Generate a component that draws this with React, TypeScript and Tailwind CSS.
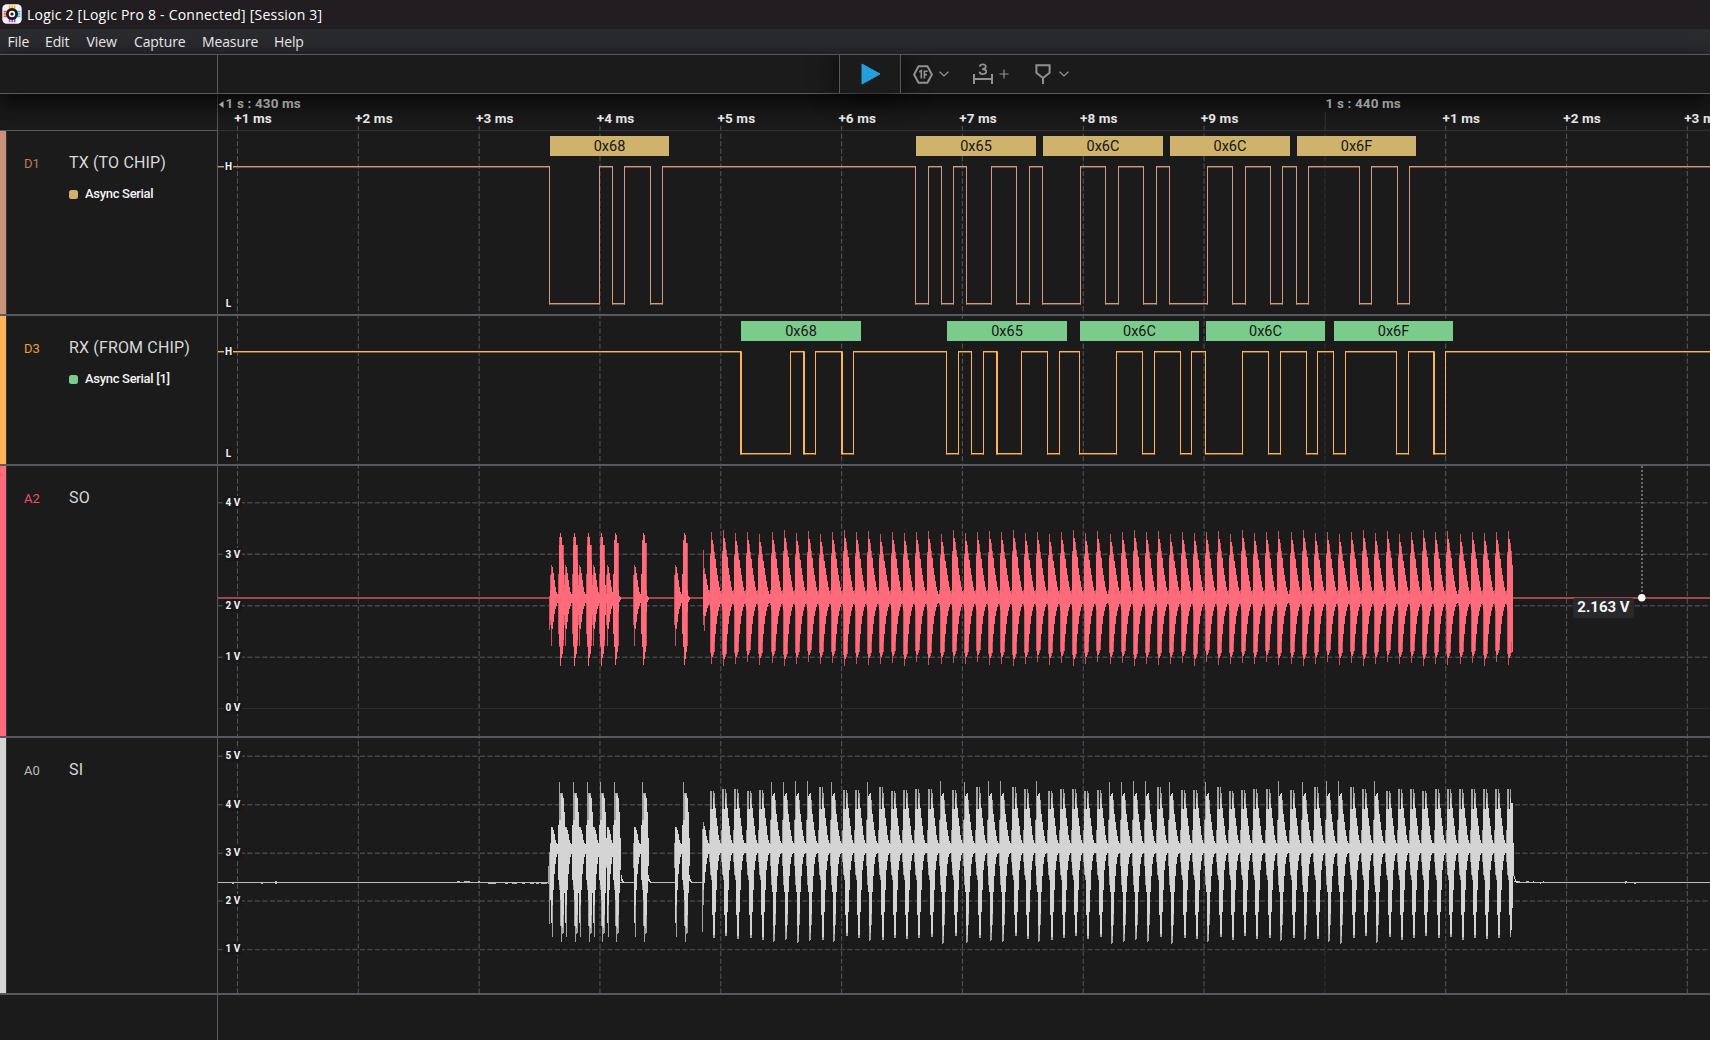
import React from "react";

const LEFT = 218;
const RIGHT = 1710;
const DIVISION = 120.82;
const FIRST_LINE = 237.5;
const GRID_LINES = Array.from({ length: 13 }, (_, i) => FIRST_LINE + i * DIVISION);

/* ---------- icons ---------- */

function AppLogo() {
  return (
    <svg width="20" height="20" viewBox="0 0 20 20" className="block">
      <rect x="0.3" y="0.3" width="19.4" height="19.4" rx="4.5" fill="#f6f3f8" />
      <g strokeWidth="1.7">
        <path d="M7.6 1.6V5M10.2 1.6V5M12.6 1.6V5" stroke="#f2b31e" />
        <path d="M7.6 15V18.2M10.2 15V18.2M12.6 15V18.2" stroke="#a050e0" />
        <path d="M1.6 7.6H5M1.6 10H5M1.6 12.4H5" stroke="#ee5a4a" />
        <path d="M15 7.6H18.4M15 10H18.4M15 12.4H18.4" stroke="#35b6ea" />
      </g>
      <circle cx="10" cy="10" r="6" fill="#1d1b20" />
      <circle cx="10" cy="10" r="2.4" fill="none" stroke="#f6f3f8" strokeWidth="1.6" />
    </svg>
  );
}

function Chevron() {
  return (
    <svg width="10" height="6" viewBox="0 0 10 6" className="block">
      <path d="M0.6 0.7L5 4.9L9.4 0.7" fill="none" stroke="#919191" strokeWidth="1.3" />
    </svg>
  );
}

function TriggerIcon() {
  return (
    <svg width="20" height="19" viewBox="0 0 20 19" className="block">
      <path
        d="M5.6 1.2H14.4L18.9 9.5L14.4 17.8H5.6L1.1 9.5Z"
        fill="none"
        stroke="#919191"
        strokeWidth="2"
        strokeLinejoin="round"
      />
      <path d="M6.2 7L8.3 5.7V13.4M11.4 13.4V6.2H14.6M11.4 9.6H14" fill="none" stroke="#919191" strokeWidth="1.6" />
    </svg>
  );
}

function MeasureIcon() {
  return (
    <svg width="20" height="22" viewBox="0 0 20 22" className="block">
      <path
        d="M6.8 3.6C7 0.6 12.8 0.5 12.8 3.6C12.8 5.3 11.3 6 9.2 6C11.6 6 13.2 6.8 13.2 8.6C13.2 11.8 6.7 11.9 6.6 8.7"
        fill="none"
        stroke="#919191"
        strokeWidth="1.8"
      />
      <path d="M1 11V21M19 11V21M1 16H19" fill="none" stroke="#919191" strokeWidth="2" />
    </svg>
  );
}

function MarkerIcon() {
  return (
    <svg width="16" height="20" viewBox="0 0 16 20" className="block">
      <path d="M1.4 1.2H14.6V8.8L8 14L1.4 8.8Z" fill="none" stroke="#919191" strokeWidth="2" />
      <path d="M8 13.5V20" stroke="#919191" strokeWidth="2" />
    </svg>
  );
}

/* ---------- grid ---------- */

function Grid({ levels = [], zero }: { levels?: number[]; zero?: number }) {
  return (
    <g>
      {GRID_LINES.map((x, i) => (
        <line key={x} x1={x} x2={x} y1={126} y2={993} stroke={i === 9 ? "#303033" : "#515157"} strokeWidth="1.1" strokeDasharray="5.2 2.3" />
      ))}
      {levels.map((y) => (
        <line key={y} x1={217.3} x2={RIGHT} y1={y} y2={y} stroke="#45454a" strokeWidth="1.4" strokeDasharray="5.2 2.3" />
      ))}
      {zero !== undefined && <line x1={LEFT} x2={RIGHT} y1={zero} y2={zero} stroke="#2b2b31" />}
    </g>
  );
}

function Plot({ top, height, children }: { top: number; height: number; children: React.ReactNode }) {
  return (
    <svg width={1492} height={height} viewBox={`${LEFT} ${top} 1492 ${height}`} className="block overflow-hidden">
      {children}
    </svg>
  );
}

function AxisLabel({ y, children }: { y: number; children: string }) {
  const wide = children.length > 1;
  return (
    <span
      className={`absolute left-[6px] flex h-[13px] items-center justify-center rounded-[2px] bg-[#18181a] text-[10px] font-bold text-[#f2f2f2] ${
        wide ? "w-[18px]" : "w-[9px]"
      }`}
      style={{ top: y - 7 }}
    >
      {children}
    </span>
  );
}

/* ---------- digital signals ---------- */

const TX_EDGES = [
  549.5, 599.5, 612.5, 624.5, 650.5, 662.5, 915.5, 928.5, 941.5, 953.5, 966.5, 991.5, 1016.5, 1029.5, 1042.5, 1080.5,
  1105.5, 1118.5, 1143.5, 1156.5, 1169.5, 1207.5, 1232.5, 1245.5, 1270.5, 1282.5, 1296.5, 1308.5, 1359.5, 1371.5,
  1397.5, 1409.5,
];
const RX_EDGES = [
  741, 790.5, 804, 815.5, 842, 853.5, 946.5, 958.5, 971.5, 983.5, 997, 1021.5, 1047.5, 1059.5, 1079.5, 1116.5, 1142.5,
  1154.5, 1180.5, 1191.5, 1205.5, 1242.5, 1268.5, 1280.5, 1306.5, 1317.5, 1333.5, 1345.5, 1396.5, 1408.5, 1434, 1445.5,
];

function Digital({ edges, high, low, color, dim }: { edges: number[]; high: number; low: number; color: string; dim: string }) {
  const xs = [LEFT, ...edges, RIGHT];
  return (
    <g>
      {xs.slice(0, -1).map((x, i) => {
        const y = i % 2 === 0 ? high : low;
        const x2 = xs[i + 1];
        return (
          <g key={x}>
            <line x1={x - 0.5} x2={x2 + 0.5} y1={y + 1} y2={y + 1} stroke={dim} />
            <line x1={x - 0.5} x2={x2 + 0.5} y1={y} y2={y} stroke={color} />
          </g>
        );
      })}
      {edges.map((x) => (
        <line key={x} x1={x} x2={x} y1={high} y2={low + 1} stroke={color} strokeWidth={Number.isInteger(x) ? 2 : 1} />
      ))}
    </g>
  );
}

type Frame = [number, number, string];

const TX_FRAMES: Frame[] = [
  [550, 669, "0x68"],
  [916, 1036, "0x65"],
  [1043, 1163, "0x6C"],
  [1170, 1290, "0x6C"],
  [1297, 1416, "0x6F"],
];
const RX_FRAMES: Frame[] = [
  [741, 861, "0x68"],
  [947, 1067, "0x65"],
  [1080, 1199, "0x6C"],
  [1206, 1325, "0x6C"],
  [1334, 1453, "0x6F"],
];

function Frames({ frames, tone }: { frames: Frame[]; tone: string }) {
  return (
    <>
      {frames.map(([a, b, label]) => (
        <span
          key={a}
          className={`absolute top-[5px] flex h-[20px] items-center justify-center pt-[2px] text-[14.5px] leading-[18px] text-[#161616] ${tone}`}
          style={{ left: a - LEFT, width: b - a }}
        >
          {label}
        </span>
      ))}
    </>
  );
}

/* ---------- analog signals ---------- */

type Column = [offset: number, top: number, bottom: number, shade?: "dim"];
type Pulse = [start: number, shape: Column[]];

function columnPaths(pulses: Pulse[]) {
  let solid = "";
  let dim = "";
  pulses.forEach(([start, shape]) => {
    shape.forEach(([dx, top, bottom, shade]) => {
      const seg = `M${Math.floor(start + dx) + 0.5} ${top}V${bottom}`;
      if (shade) dim += seg;
      else solid += seg;
    });
  });
  return { solid, dim };
}

const SO_MAIN: Column[] = [
  [-2, 590, 605, "dim"], [-1, 553, 653, "dim"], [-1, 556, 610], [0, 531.5, 664, "dim"], [0, 540, 656], [1, 540, 657], [2, 544, 655, "dim"], [2, 550, 652],
  [3, 552, 652, "dim"], [3, 558, 642], [4, 559, 634], [5, 568, 624], [6, 575, 616], [7, 581, 611], [8, 587, 607], [9, 591, 604], [10, 594, 603],
];
const SO_BIG: Column[] = [
  [-2, 574, 634, "dim"], [-1, 537, 647, "dim"], [-1, 545, 645], [0, 533, 666], [1, 537, 658], [2, 545, 654], [3, 545, 646, "dim"], [3, 560, 640], [4, 585, 615],
];
const SO_TALL: Column[] = [
  [-2, 574, 634], [-1, 540, 647], [0, 533, 665], [1, 535, 659], [2, 543, 652], [3, 543, 646, "dim"], [3, 590, 612], [4, 596, 602], [5, 597, 600],
];
const SO_SMALL: Column[] = [
  [-1, 575, 625, "dim"], [0, 565, 646, "dim"], [0, 574, 628], [1, 567, 629], [2, 573, 622], [3, 580, 614], [4, 587, 609], [5, 592, 606], [6, 594, 603], [7, 594, 603],
];
const SO_LEAD: Column[] = [
  [0, 550, 625, "dim"], [0, 570, 615], [1, 568, 631, "dim"], [1, 574, 616], [2, 574, 616], [3, 579, 612], [4, 585, 608], [5, 590, 605], [6, 593, 603], [7, 594, 602],
];

const SI_DOUBLE: Column[] = [
  [-2, 843, 853], [-1, 830, 862, "dim"], [0, 791, 875, "dim"], [0, 809, 868], [1, 791, 880, "dim"], [1, 809, 876], [2, 809, 915], [3, 791, 938, "dim"], [3, 798, 935],
  [4, 793, 938, "dim"], [4, 804, 935], [5, 808, 912], [6, 818, 890], [7, 826, 870], [8, 835, 861], [9, 840, 855], [10, 843, 853],
];
const SI_SINGLE: Column[] = [
  [-2, 843, 853], [-1, 820, 866, "dim"], [0, 782, 885, "dim"], [0, 819, 876], [1, 796, 892], [2, 794, 926], [2, 794, 942, "dim"], [3, 793, 934], [3, 793, 941, "dim"], [4, 809, 914],
  [4, 800, 925, "dim"], [5, 814, 892], [6, 822, 876], [7, 830, 864], [8, 836, 857], [9, 841, 854], [10, 843, 853],
];
const SI_BIG: Column[] = [
  [-1, 825, 880], [0, 782, 890, "dim"], [0, 820, 885], [1, 793, 926, "dim"], [1, 820, 900], [2, 793, 942, "dim"], [2, 794, 926], [3, 793, 934, "dim"], [3, 796, 928], [4, 798, 933, "dim"], [4, 798, 915], [5, 812, 893], [6, 838, 866],
];
const SI_SMALL: Column[] = [
  [-1, 843, 868, "dim"], [0, 827, 923], [1, 827, 937, "dim"], [1, 828, 905], [2, 830, 890], [3, 834, 874], [4, 840, 864], [5, 843, 857], [6, 844, 854], [7, 844, 854],
];
const SI_TAIL: Column[] = [[5, 841, 870], [6, 875, 881], [7, 879, 882], [8, 881, 883]];

const BIG_AT = [560, 574, 588, 601, 615];
const SMALL_AT = [551, 565.5, 579.5, 593.5, 607];
const PULSES = Array.from({ length: 67 }, (_, k) => 711.7 + 12.07 * k);

const SI_PEAKS = [
  791, 789, 789, 791, 790, 782, 782, 781, 781, 787, 782, 790, 790, 782, 787, 791, 790, 789, 789, 781, 790, 782, 787,
  781, 781, 787, 789, 781,
];

function jitter(k: number) {
  return [0, -2, 1, 0, -1, 2][(k * 7 + (k >> 2)) % 6];
}

const SO_PULSES: Pulse[] = [
  [549, [[0, 596, 630, "dim"], [1, 590, 620]]],
  ...SMALL_AT.map((x): Pulse => [x, SO_SMALL]),
  ...BIG_AT.slice(0, 4).map((x): Pulse => [x, SO_BIG]),
  [615, SO_TALL],
  [634, SO_SMALL],
  [643, SO_TALL],
  [675, SO_SMALL],
  [684, SO_TALL],
  [703, SO_LEAD],
  ...PULSES.map((x, k): Pulse => {
    const shape = SO_MAIN.map(([dx, t, b, s]): Column => [dx, t < 565 ? t + jitter(k) : t, b > 645 ? b + jitter(k + 3) : b, s]);
    return [x, k === 66 ? shape.filter((c) => c[0] < 4) : shape];
  }),
  [1509, [[3, 565, 652]]],
];

const SI_PULSES: Pulse[] = [
  [548, [[0, 866, 884, "dim"], [1, 852, 924, "dim"], [2, 852, 900]]],
  ...SMALL_AT.map((x): Pulse => [x, SI_SMALL]),
  ...BIG_AT.map((x): Pulse => [x - 0.5, SI_BIG]),
  [615, SI_TAIL],
  [634, SI_SMALL],
  [642, SI_BIG],
  [642, SI_TAIL],
  [675, SI_SMALL],
  [683, SI_BIG],
  [683, SI_TAIL],
  [702.5, [[0, 829, 932, "dim"], [1, 822, 905, "dim"], [1, 829, 890], [2, 826, 883], [3, 830, 872], [4, 836, 864], [5, 840, 858], [6, 843, 854], [7, 844, 854]]],
  ...PULSES.map((x, k): Pulse => {
    const peak = k > 59 ? 789 : SI_PEAKS[k % SI_PEAKS.length];
    const base = peak < 784 ? SI_SINGLE : SI_DOUBLE;
    const shape = base.map(([dx, t, b, s]): Column => [dx, t < 793 ? peak : t, b > 930 ? b + jitter(k) : b, s]);
    return [x - 0.9, k === 66 ? shape.filter((c) => c[0] < 4) : shape];
  }),
  [1508, [[3, 803, 930], [4, 803, 908], [5, 843, 876], [6, 876, 879], [7, 879, 882], [8, 881, 883], [9, 881, 883]]],
];

function Analog({ pulses, band, spans, color, dim }: { pulses: Pulse[]; band: [number, number]; spans: [number, number][]; color: string; dim: string }) {
  const paths = columnPaths(pulses);
  return (
    <g shapeRendering="crispEdges">
      <path d={paths.dim} stroke={dim} fill="none" />
      <path d={paths.solid} stroke={color} fill="none" />
      {spans.map(([a, b]) => (
        <rect key={a} x={a} y={band[0]} width={b - a} height={band[1] - band[0]} fill={color} />
      ))}
    </g>
  );
}

const BURSTS: [number, number][] = [[550, 618], [634, 646], [675, 687], [703, 1513]];

/* ---------- rows ---------- */

function Channel({
  id, name, bar, idTone, analyzer, swatch, height, children,
}: {
  id: string; name: string; bar: string; idTone: string; analyzer?: string; swatch?: string; height: string; children: React.ReactNode;
}) {
  return (
    <section className={`flex shrink-0 border-b-2 border-[#58585e] box-content ${height}`}>
      <aside className="flex w-[218px] shrink-0 border-r border-[#58585e]">
        <div className={`w-[6px] shrink-0 ${bar}`} />
        <div className="w-px shrink-0 bg-[#353535]" />
        <div className="pt-[20px] pl-[17px]">
          <div className="flex h-[24px] items-center">
            <span className={`w-[45px] pt-[2px] text-[13px] ${idTone}`}>{id}</span>
            <span className="text-[16px] tracking-[0.15px] whitespace-nowrap text-[#d8d8d8]">{name}</span>
          </div>
          {analyzer && (
            <div className="mt-[11px] ml-[45px] flex h-[16px] items-center gap-[7px]">
              <span className={`size-[9px] rounded-[2.5px] ${swatch}`} />
              <span className="text-[13px] font-medium tracking-[-0.31px] whitespace-nowrap text-[#f4f4f4]">{analyzer}</span>
            </div>
          )}
        </div>
      </aside>
      <div className="relative flex-1 overflow-hidden">{children}</div>
    </section>
  );
}

const MENU: [string, string][] = [
  ["File", "w-[37.5px]"],
  ["Edit", "w-[41.5px]"],
  ["View", "w-[47.5px]"],
  ["Capture", "w-[68px]"],
  ["Measure", "w-[72px]"],
  ["Help", "w-[40px]"],
];

const TICKS = ["+1 ms", "+2 ms", "+3 ms", "+4 ms", "+5 ms", "+6 ms", "+7 ms", "+8 ms", "+9 ms", "", "+1 ms", "+2 ms", "+3 ms"];

export default function App() {
  return (
    <div className="flex h-[1040px] w-[1710px] flex-col overflow-hidden bg-[#1b1b1b] font-['Roboto',sans-serif]">
      <header className="flex h-[29px] shrink-0 items-center gap-[5px] bg-[#211d21] pl-[2px] pb-px font-['Open_Sans',sans-serif] text-[14px] text-white">
        <AppLogo />
        <span className="tracking-[0.22px] whitespace-nowrap">Logic 2 [Logic Pro 8 - Connected] [Session 3]</span>
      </header>
      <nav className="flex h-[25px] shrink-0 items-center bg-[#2a2b2f] pl-[7.5px] font-['Open_Sans',sans-serif] text-[14px] tracking-[-0.12px] text-[#f3f3f3]">
        {MENU.map(([label, width]) => (
          <span key={label} className={`shrink-0 ${width}`}>
            {label}
          </span>
        ))}
      </nav>

      <div className="relative z-10 flex h-[40px] shrink-0 border-y border-[#58585e] bg-[#1b1b1b] shadow-[0_8px_24px_2px_rgba(0,0,0,0.75)]">
        <div className="w-[218px] shrink-0 border-r border-[#58585e]" />
        <div className="flex flex-1 items-center pl-[621px]">
          <button className="flex h-[38px] w-[62px] shrink-0 items-center border-x border-[#58585e] bg-[#1b1b1b] pl-[21px] shadow-[0_0_28px_rgba(0,0,0,0.8)] [clip-path:inset(0_-40px_-37px_-40px)]">
            <svg width="20" height="22" viewBox="0 0 20 22" className="block">
              <path d="M1 1L19 11L1 21Z" fill="#249fdb" stroke="#249fdb" strokeWidth="1" strokeLinejoin="round" />
            </svg>
          </button>
          <div className="relative ml-[12px] flex items-center gap-[6px]">
            <TriggerIcon />
            <Chevron />
          </div>
          <div className="relative ml-[24px] flex items-center gap-[6px]">
            <MeasureIcon />
            <svg width="10" height="10" viewBox="0 0 10 10" className="block">
              <path d="M5 0.5V9.5M0.5 5H9.5" stroke="#919191" strokeWidth="1.2" />
            </svg>
          </div>
          <div className="relative ml-[26px] flex items-center gap-[8px]">
            <MarkerIcon />
            <Chevron />
          </div>
        </div>
      </div>

      <div className="flex h-[37px] shrink-0 bg-[#1b1b1b]">
        <div className="w-[218px] shrink-0 border-r border-b border-[#58585e]" />
        <div className="relative z-20 flex-1 overflow-hidden border-b border-[#333337]">
          <div className="absolute inset-0">
            <Plot top={94} height={36}>
              <Grid />
              <path d="M219 104.5L223.5 101V108Z" fill="#a8a8a8" />
              <line x1="1325.3" x2="1325.3" y1="112" y2="130" stroke="#2f2f31" />
            </Plot>
          </div>
          <span className="absolute top-px left-[7.5px] text-[13.5px] leading-[17px] font-bold tracking-[0.14px] whitespace-nowrap text-[#9b9b9b]">1 s : 430 ms</span>
          <span className="absolute top-px left-[1107.5px] text-[13.5px] leading-[17px] font-bold tracking-[0.14px] whitespace-nowrap text-[#9b9b9b]">1 s : 440 ms</span>
          {TICKS.map((label, i) => (
            <span
              key={i}
              className="absolute top-[16px] text-[13.5px] leading-[16px] font-bold tracking-[0.1px] whitespace-nowrap text-[#e4e4e4]"
              style={{ left: GRID_LINES[i] - LEFT - 3.2 }}
            >
              {label}
            </span>
          ))}
        </div>
      </div>

      <Channel id="D1" name="TX (TO CHIP)" bar="bg-[#c7937a]" idTone="text-[#bd795b]" analyzer="Async Serial" swatch="bg-[#cfb26c]" height="h-[183px]">
        <Plot top={131} height={183}>
          <Grid />
          <Digital edges={TX_EDGES} high={166.5} low={303.5} color="#cf9b80" dim="#6c4f42" />
        </Plot>
        <Frames frames={TX_FRAMES} tone="bg-[#cfb26c]" />
        <AxisLabel y={36}>H</AxisLabel>
        <AxisLabel y={173}>L</AxisLabel>
      </Channel>

      <Channel id="D3" name="RX (FROM CHIP)" bar="bg-[#ffb258]" idTone="text-[#ea9c3f]" analyzer="Async Serial [1]" swatch="bg-[#7bcc8c]" height="h-[148px]">
        <Plot top={316} height={148}>
          <Grid />
          <Digital edges={RX_EDGES} high={351.5} low={453.5} color="#ffb258" dim="#7d5b32" />
        </Plot>
        <Frames frames={RX_FRAMES} tone="bg-[#7bcc8c]" />
        <AxisLabel y={36}>H</AxisLabel>
        <AxisLabel y={138}>L</AxisLabel>
      </Channel>

      <Channel id="A2" name="SO" bar="bg-[#ff6b7b]" idTone="text-[#ef5163]" height="h-[270px]">
        <Plot top={466} height={270}>
          <Grid levels={[502.8, 554.3, 605.8, 657.3]} zero={708.5} />
          <rect x={LEFT} y={597} width={1492} height={2} fill="#a0464f" />
          <Analog pulses={SO_PULSES} band={[594, 603]} spans={BURSTS} color="#ff6b7b" dim="#c45662" />
          <line x1="1642" x2="1642" y1="466" y2="594" stroke="#6a6a6d" strokeWidth="2" strokeDasharray="2 2" />
          <circle cx="1641.8" cy="597.8" r="3.7" fill="#ffffff" />
        </Plot>
        <span className="absolute top-[132px] left-[1355px] flex h-[20px] w-[61px] items-center justify-center rounded-[3px] bg-[#29292c] pb-[2px] text-[15px] font-bold whitespace-nowrap text-[#f4f4f4]">
          2.163 V
        </span>
        <AxisLabel y={37}>4 V</AxisLabel>
        <AxisLabel y={89}>3 V</AxisLabel>
        <AxisLabel y={140}>2 V</AxisLabel>
        <AxisLabel y={191}>1 V</AxisLabel>
        <AxisLabel y={242}>0 V</AxisLabel>
      </Channel>

      <Channel id="A0" name="SI" bar="bg-[#d4d4d4]" idTone="text-[#bdbdbd]" height="h-[255px]">
        <Plot top={738} height={255}>
          <Grid levels={[756.3, 804.7, 853.3, 901, 949.6]} />
          <g shapeRendering="crispEdges" stroke="#bcbcbc">
            <path d="M218 882.5H549M618 882.5H634M650 882.5H675M691 882.5H703M1516 882.5H1710" />
            <path d="M232 883.5h2M261 883.5h2M275 881.5h2M275 883.5h2M457 881.5h3M464 881.5h6M478 881.5h2M488 883.5h8M505 883.5h3M512 883.5h5M522 883.5h3M530 883.5h4M536 883.5h3M541 883.5h6M1514 881.5h6M1526 881.5h3M1533 881.5h1M1540 883.5h1M1543 881.5h1M1625 881.5h2M1625 883.5h1M1634 883.5h2" />
          </g>
          <Analog pulses={SI_PULSES} band={[844, 853]} spans={BURSTS} color="#d4d4d4" dim="#a2a2a2" />
        </Plot>
        <AxisLabel y={18}>5 V</AxisLabel>
        <AxisLabel y={67}>4 V</AxisLabel>
        <AxisLabel y={115}>3 V</AxisLabel>
        <AxisLabel y={163}>2 V</AxisLabel>
        <AxisLabel y={211}>1 V</AxisLabel>
      </Channel>

      <footer className="flex flex-1">
        <div className="w-[218px] shrink-0 border-r border-[#58585e]" />
      </footer>
    </div>
  );
}
